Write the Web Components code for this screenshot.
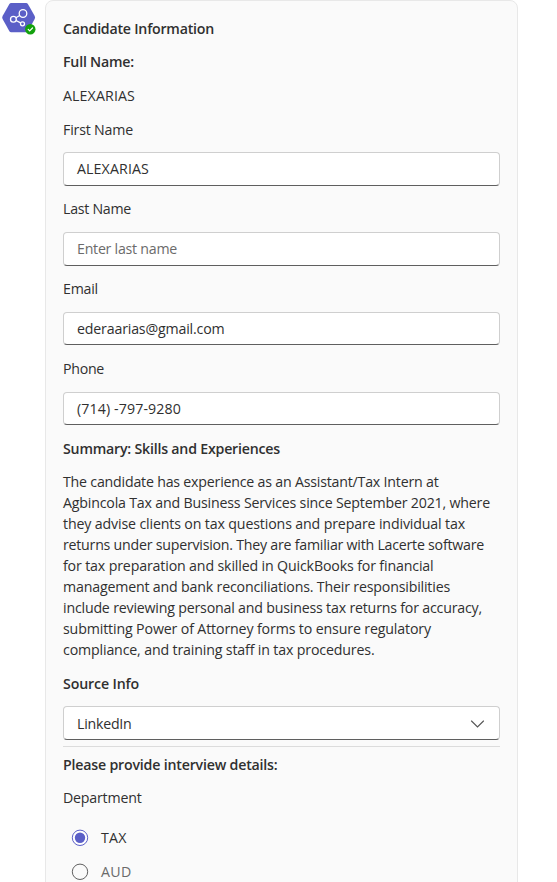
<!DOCTYPE html>
<html lang="en">
<head>
<meta charset="utf-8">
<title>Candidate Information</title>
<style>
html,body{margin:0;height:100%;overflow:hidden;background:#fff}
body{font-family:"Open Sans","Noto Sans",sans-serif;font-size:14.2px;line-height:21px;color:#303030}
</style>
</head>
<body>
<chat-message>
  <bot-avatar slot="avatar"></bot-avatar>
  <text-row bold w="151">Candidate Information</text-row>
  <text-row bold w="71" style="--gap:12px">Full Name:</text-row>
  <text-row w="72" style="--gap:13px">ALEXARIAS</text-row>
  <form-field label="First Name" lw="70" w="72" style="--gap:13px;--label-gap:12px">ALEXARIAS</form-field>
  <form-field label="Last Name" lw="68" w="100" placeholder>Enter last name</form-field>
  <form-field label="Email" lw="35" w="147.5" style="--box:33px">ederaarias@gmail.com</form-field>
  <form-field label="Phone" lw="41" w="104" style="--gap:13px;--box:33px">(714) -797-9280</form-field>
  <text-row bold w="217" style="--gap:13px">Summary: Skills and Experiences</text-row>
  <text-row w="375.5" style="--gap:12px">The candidate has experience as an Assistant/Tax Intern at</text-row>
  <text-row w="427">Agbincola Tax and Business Services since September 2021, where</text-row>
  <text-row w="402">they advise clients on tax questions and prepare individual tax</text-row>
  <text-row w="421">returns under supervision. They are familiar with Lacerte software</text-row>
  <text-row w="370.5">for tax preparation and skilled in QuickBooks for financial</text-row>
  <text-row w="387">management and bank reconciliations. Their responsibilities</text-row>
  <text-row w="419">include reviewing personal and business tax returns for accuracy,</text-row>
  <text-row w="368">submitting Power of Attorney forms to ensure regulatory</text-row>
  <text-row w="311.5">compliance, and training staff in tax procedures.</text-row>
  <form-field label="Source Info" lw="76" bold w="54.5" select style="--gap:13px;--label-gap:12px;--lift:0">LinkedIn</form-field>
  <card-rule></card-rule>
  <text-row bold w="214.5" style="--gap:7px">Please provide interview details:</text-row>
  <text-row w="78.5" style="--gap:12px">Department</text-row>
  <radio-option checked w="25.5" style="--gap:19px">TAX</radio-option>
  <radio-option w="30.5" style="--gap:13px">AUD</radio-option>
</chat-message>
<script>
const define = (name, html, setup) => customElements.define(name, class extends HTMLElement {
  connectedCallback() {
    if (this.shadowRoot) return;
    this.attachShadow({mode: 'open'}).innerHTML = html(this);
    if (setup) setup(this);
  }
});

/* Spreads a line's letters so that it takes the width given in its w attribute. */
define('text-row', () => `<style>
:host{display:block;height:21px;margin-top:var(--gap,0);white-space:pre}
:host([bold]){font-weight:600}
span{display:inline-block}
</style><span><slot></slot></span>`, el => {
  const span = el.shadowRoot.querySelector('span');
  const fit = () => {
    span.style.letterSpacing = '0';
    const n = el.textContent.length;
    span.style.letterSpacing = (el.getAttribute('w') - span.getBoundingClientRect().width) / n + 'px';
  };
  fit();
  document.fonts.ready.then(fit);
});

define('form-field', el => `<style>
:host{display:block;margin-top:var(--gap,12px)}
text-row{--gap:0}
.box{box-sizing:border-box;height:var(--box,34px);margin-top:var(--label-gap,13px);padding:0 14px var(--lift,1px) 13px;border:1px solid #cfcfcf;border-bottom-color:#5f5f5f;border-radius:4px;background:#fff;display:flex;align-items:center;justify-content:space-between}
:host([placeholder]) .box{color:#6b6b6b}
</style>
<text-row ${el.hasAttribute('bold') ? 'bold' : ''} w="${el.getAttribute('lw')}">${el.getAttribute('label')}</text-row>
<div class="box"><text-row w="${el.getAttribute('w')}">${el.textContent}</text-row>
${el.hasAttribute('select') ? '<svg width="15" height="9" viewBox="0 0 15 9" fill="none" stroke="#555" stroke-width="1.100" stroke-linecap="round"><path d="M1.500 2 7.500 8 13.500 2"/></svg>' : ''}</div>`);

define('card-rule', () => `<style>:host{display:block;height:1px;margin-top:6px;background:#dcdcdc}</style>`);

define('radio-option', el => `<style>
:host{display:flex;align-items:center;gap:12px;height:21px;margin-top:var(--gap,13px);padding-left:8px;color:#6a6a6a}
:host([checked]){color:#303030}
text-row{--gap:0}
svg{display:block}
</style>
<svg width="18" height="18" viewBox="0 0 18 18">${el.hasAttribute('checked')
  ? '<circle cx="9" cy="8.800" r="7.700" fill="#fff" stroke="#5b5fc7"/><circle cx="9" cy="8.800" r="5.200" fill="#5b5fc7"/>'
  : '<circle cx="9" cy="8.800" r="7.700" fill="none" stroke="#606060"/>'}</svg>
<text-row w="${el.getAttribute('w')}">${el.textContent}</text-row>`);

define('bot-avatar', () => `<style>:host{display:block;width:37px;height:37px}svg{display:block}</style>
<svg width="37" height="37" viewBox="0 0 37 37">
<path d="M11.200 3h14.900q1.200 0 1.800 1l6.800 12.100q.8 1.500 0 3l-6.800 12.200q-.6 1-1.800 1H11.200q-1.200 0-1.800-1L2.600 19.100q-.8-1.500 0-3L9.400 4q.6-1 1.800-1z" fill="#5b5fc7"/>
<g fill="none" stroke="#fff" stroke-width="1.300"><circle cx="23" cy="13.500" r="3.800"/><circle cx="13.400" cy="19.200" r="2.900"/><circle cx="22.500" cy="23.800" r="2"/><path d="M15.900 17.700l3.800-2.200M16 20.500l4.600 2.400"/></g>
<circle cx="30.300" cy="29.300" r="5.200" fill="#13a10e"/><path d="M28.200 29.400l1.500 1.500 2.800-2.900" fill="none" stroke="#fff" stroke-width="1.200" stroke-linecap="round" stroke-linejoin="round"/>
</svg>`);

define('chat-message', () => `<style>
:host{display:grid;grid-template-columns:37px 473px;column-gap:8px;align-items:start;height:882px;overflow:hidden}
section{box-sizing:border-box;height:900px;padding:17px 17px 0;border:1px solid #e8e8e8;border-radius:8px;background:#fafafa}
</style><slot name="avatar"></slot><section><slot></slot></section>`);
</script>
</body>
</html>
